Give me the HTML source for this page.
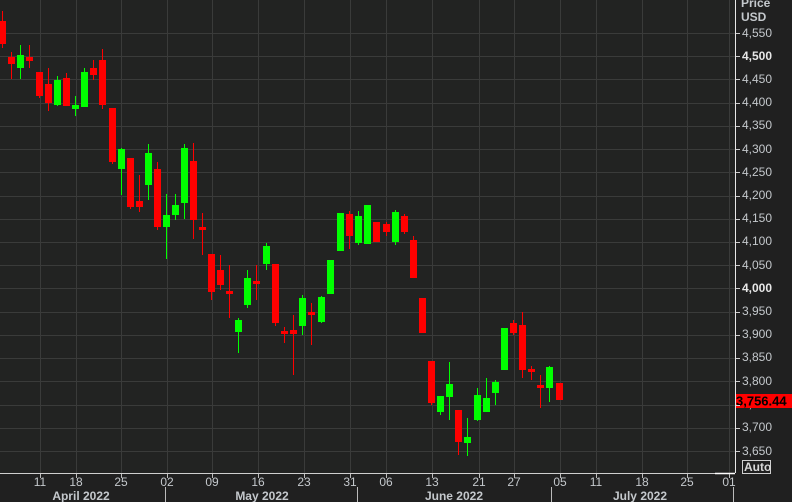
<!DOCTYPE html>
<html><head><meta charset="utf-8"><style>
html,body{margin:0;padding:0;background:#202020;width:792px;height:502px;overflow:hidden}
svg{display:block}
text{font-family:"Liberation Sans","DejaVu Sans",sans-serif;font-size:12px;fill:#c4c8cc}
</style></head><body>
<svg id="s" width="792" height="502" viewBox="0 0 792 502">
<rect x="0" y="0" width="735" height="473" fill="#222322"/>
<g id="grid"></g>
<g id="c"></g>
<line x1="735.5" y1="0" x2="735.5" y2="473" stroke="#e8e8e8" stroke-width="1"/>
<line x1="0" y1="473.5" x2="735" y2="473.5" stroke="#cfcfcf" stroke-width="1"/>
<line x1="715" y1="473.5" x2="735" y2="473.5" stroke="#ffffff" stroke-width="1.5"/>
<text x="741" y="7" font-weight="bold">Price</text>
<text x="741" y="21" font-weight="bold">USD</text>
<g id="pl">
<text x="742" y="37">4,550</text>
<text x="742" y="60" font-weight="bold" style="fill:#e8e8e8">4,500</text>
<text x="742" y="83">4,450</text>
<text x="742" y="106">4,400</text>
<text x="742" y="129">4,350</text>
<text x="742" y="153">4,300</text>
<text x="742" y="176">4,250</text>
<text x="742" y="199">4,200</text>
<text x="742" y="222">4,150</text>
<text x="742" y="245">4,100</text>
<text x="742" y="269">4,050</text>
<text x="742" y="292" font-weight="bold" style="fill:#e8e8e8">4,000</text>
<text x="742" y="315">3,950</text>
<text x="742" y="338">3,900</text>
<text x="742" y="361">3,850</text>
<text x="742" y="385">3,800</text>
<text x="742" y="408">3,750</text>
<text x="742" y="431">3,700</text>
<text x="742" y="455">3,650</text>
</g>
<rect x="736" y="394" width="56" height="14" fill="#ff0000"/>
<text x="736" y="405.5" font-weight="bold" style="fill:#000;font-size:13px">3,756.44</text>
<rect x="742.5" y="460.5" width="28" height="13" fill="none" stroke="#d0d0d0"/>
<text x="744" y="471" font-weight="bold" style="fill:#d8d8d8">Auto</text>
<g id="dl">
<text x="40" y="486" text-anchor="middle">11</text>
<text x="76" y="486" text-anchor="middle">18</text>
<text x="121" y="486" text-anchor="middle">25</text>
<text x="167" y="486" text-anchor="middle">02</text>
<text x="212" y="486" text-anchor="middle">09</text>
<text x="258" y="486" text-anchor="middle">16</text>
<text x="304" y="486" text-anchor="middle">23</text>
<text x="350" y="486" text-anchor="middle">31</text>
<text x="386" y="486" text-anchor="middle">06</text>
<text x="432" y="486" text-anchor="middle">13</text>
<text x="479" y="486" text-anchor="middle">21</text>
<text x="514" y="486" text-anchor="middle">27</text>
<text x="560" y="486" text-anchor="middle">05</text>
<text x="596" y="486" text-anchor="middle">11</text>
<text x="642" y="486" text-anchor="middle">18</text>
<text x="687" y="486" text-anchor="middle">25</text>
<text x="729" y="486" text-anchor="middle">01</text>
</g>
<text x="81" y="500" text-anchor="middle" font-weight="bold">April 2022</text>
<text x="262" y="500" text-anchor="middle" font-weight="bold">May 2022</text>
<text x="454" y="500" text-anchor="middle" font-weight="bold">June 2022</text>
<text x="640" y="500" text-anchor="middle" font-weight="bold">July 2022</text>
<g stroke="#bbbbbb" stroke-width="1">
<line x1="165.5" y1="487" x2="165.5" y2="502"/>
<line x1="357.5" y1="487" x2="357.5" y2="502"/>
<line x1="551.5" y1="487" x2="551.5" y2="502"/>
<line x1="733.5" y1="487" x2="733.5" y2="502"/>
</g>
</svg>
<script>
var NS="http://www.w3.org/2000/svg";
function el(p,t,a){var e=document.createElementNS(NS,t);for(var k in a)e.setAttribute(k,a[k]);p.appendChild(e);return e;}
var g=document.getElementById('grid');
var xs=[40,76,121,167,212,258,304,350,386,432,479,514,560,596,642,687,729];
xs.forEach(function(x){el(g,'line',{x1:x+.5,y1:0,x2:x+.5,y2:473,stroke:'#3a3b3a'});
 el(document.getElementById('s'),'line',{x1:x+.5,y1:474,x2:x+.5,y2:478,stroke:'#bbb'});});
for(var i=0;i<19;i++){var y=Math.round(33+i*23.22)+.5;el(g,'line',{x1:0,y1:y,x2:735,y2:y,stroke:'#3a3b3a'});
 el(document.getElementById('s'),'line',{x1:736,y1:y,x2:740,y2:y,stroke:'#ccc'});}
var C=[[2,'r',21,44,11,48],[11,'r',57,64,52,79],[20,'g',55,68,45,79],[29,'r',57,61,45,68],[39,'r',72,96,72,98],
[48,'r',84,103,68,111],[57,'g',80,105,76,106],[66,'r',78,106,73,106],[75,'g',105,109,96,116],[84,'g',72,107,68,107],
[93,'r',68,75,60,80],[102,'r',60,105,49,109],[112,'r',108,162,108,164],[121,'g',149,169,148,195],[130,'r',158,207,158,209],
[139,'r',201,207,175,212],[148,'g',153,185,144,200],[157,'r',169,227,162,230],[166,'g',215,227,194,259],[175,'g',205,215,194,220],
[184,'g',148,203,144,219],[193,'r',161,220,143,239],[202,'r',227,230,213,255],[211,'r',254,292,254,300],[220,'r',270,285,255,290],
[229,'r',291,294,265,318],[238,'g',320,332,318,353],[247,'g',278,305,270,308],[256,'r',281,283,265,300],[266,'g',246,264,243,270],
[275,'r',264,323,264,326],[284,'r',331,334,327,343],[293,'r',330,334,315,375],[302,'g',298,326,295,335],[311,'r',312,315,303,345],
[321,'g',297,322,296,323],[330,'g',260,294,260,294],[340,'g',213,251,213,251],[349,'r',214,236,211,249],[358,'g',216,243,211,245],
[367,'g',205,244,205,244],[376,'r',222,242,222,242],[386,'r',224,232,222,236],[395,'g',212,242,210,245],[404,'r',216,232,214,234],
[413,'r',240,278,236,278],[422,'r',298,333,298,333],[431,'r',361,403,361,405],[440,'g',396,412,396,415],[449,'g',384,397,362,420],
[458,'r',410,442,410,455],[467,'g',437,443,418,456],[477,'g',395,420,388,421],[486,'g',398,412,378,412],[495,'g',382,393,380,405],
[504,'g',328,370,328,370],[513,'r',323,333,320,335],[522,'r',325,370,312,378],[531,'r',369,372,366,380],[540,'r',385,388,375,408],
[549,'g',367,388,366,402],[559,'r',383,400,383,400]];
var cg=document.getElementById('c');
C.forEach(function(c){var col=c[1]=='r'?'#ff0000':'#00ff00';
 el(cg,'rect',{x:c[0],y:c[4],width:1,height:c[5]-c[4],fill:col});
 el(cg,'rect',{x:c[0]-3,y:c[2],width:7,height:Math.max(3,c[3]-c[2]),fill:col});});
</script>
</body></html>
